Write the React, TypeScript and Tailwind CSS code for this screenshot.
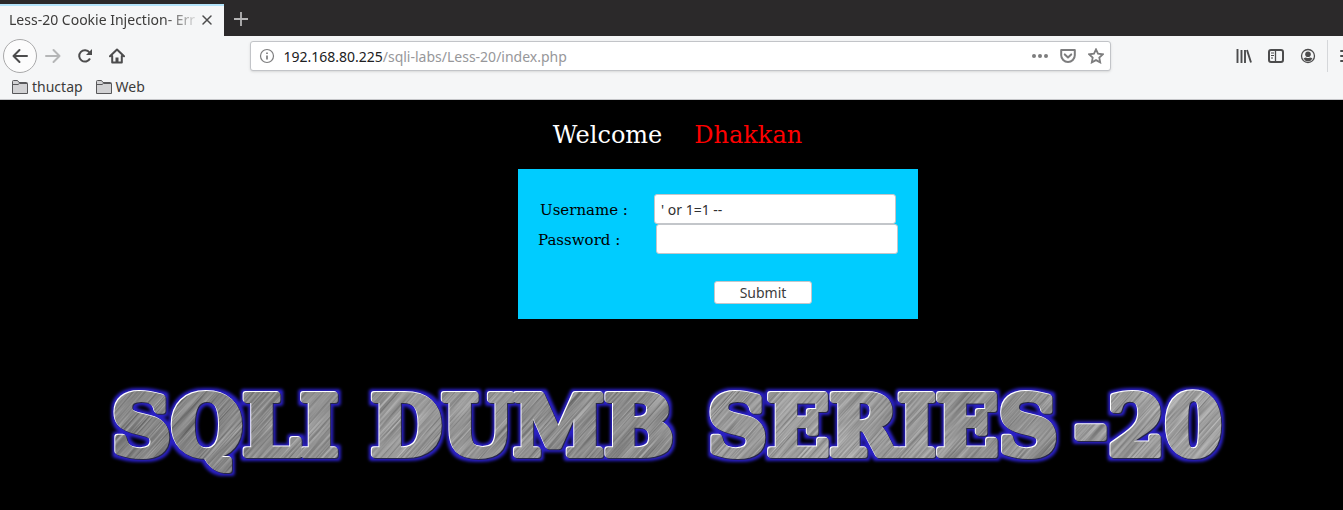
import type { ReactNode } from "react";

const ui = "font-['Noto_Sans',sans-serif]";

function Icon({ children, className = "" }: { children: ReactNode; className?: string }) {
  return (
    <svg viewBox="0 0 16 16" className={`h-4 w-4 shrink-0 ${className}`} fill="none" stroke="currentColor" strokeWidth="2" strokeLinecap="round" strokeLinejoin="round" aria-hidden="true">
      {children}
    </svg>
  );
}

function ToolButton({ label, children, className = "w-8 h-8" }: { label: string; children: ReactNode; className?: string }) {
  return (
    <button type="button" aria-label={label} className={`flex shrink-0 items-center justify-center ${className}`}>
      {children}
    </button>
  );
}

function Bookmark({ name }: { name: string }) {
  return (
    <a href="#" className="flex items-center gap-1">
      <svg viewBox="0 0 16 16" className="h-4 w-4" aria-hidden="true">
        <path d="M.5 14.500V2.500Q.5 1.500 1.500 1.500H5.500L7 3.500H14.500Q15.500 3.500 15.500 4.500V14.500Z" fill="#d2d2d4" stroke="#58585a" />
        <path d="M1 5.500H6L7.500 4.500H15" fill="none" stroke="#58585a" />
      </svg>
      {name}
    </a>
  );
}

function Browser() {
  return (
    <header className={`${ui} bg-[#f5f6f7] text-sm text-[#3c3b3a]`}>
      <div className="flex h-9 bg-[#2b292a] pt-1">
        <div className="flex w-56 items-center border-t-2 border-[#b3e3fa] bg-[#f5f6f7] pr-[7px] pb-0.5 pl-[9px]">
          <span className="flex-1 whitespace-nowrap [mask-image:linear-gradient(to_right,black_155px,transparent_192px)]">
            Less-20 Cookie Injection- Err
          </span>
          <button type="button" aria-label="Close tab" className="flex h-5 w-5 items-center justify-center text-[#4c4c4c]">
            <Icon><path d="M4 4l8 8M12 4l-8 8" strokeWidth="1.500" /></Icon>
          </button>
        </div>
        <button type="button" aria-label="New tab" className="flex w-[34px] items-center justify-center pb-0.5 text-[#b5b4b5]">
          <Icon><path d="M8 1v14M1 8h14" strokeWidth="1.800" strokeLinecap="butt" /></Icon>
        </button>
      </div>

      <div className="flex h-10 items-center overflow-hidden pl-[3px] text-[#4c4c4d]">
        <ToolButton label="Back" className="h-[34px] w-[34px] rounded-full border border-[#a9a9aa] bg-[#fcfcfc]">
          <Icon><path d="M15 8H1.500M7.500 2L1.500 8l6 6" /></Icon>
        </ToolButton>
        <ToolButton label="Forward" className="h-8 w-8 text-[#b5b6b7]">
          <Icon><path d="M1 8h13.500M8.500 2l6 6-6 6" /></Icon>
        </ToolButton>
        <ToolButton label="Reload">
          <Icon>
            <path d="M13 10.500A5.700 5.700 0 1 1 12.500 4.500" strokeLinecap="butt" />
            <path d="M15 1v6H9z" fill="currentColor" stroke="none" />
          </Icon>
        </ToolButton>
        <ToolButton label="Home">
          <Icon>
            <path d="M1 8.300L8 1.500l7 6.800M3.200 8v6.500h9.600V8" />
            <path d="M6.500 14V9.500h3V14z" fill="currentColor" stroke="none" />
          </Icon>
        </ToolButton>
        <div className="flex-1" />
        <div className="flex h-[30px] w-[64.2%] items-center gap-3 rounded-[3px] border border-[#c2c4c8] bg-white pr-1.5 pl-2 text-[#7d7d7e] shadow-sm">
          <Icon>
            <circle cx="8" cy="8" r="6.500" strokeWidth="1.200" />
            <path d="M8 7.500v4M8 4.500v1.500" strokeWidth="1.700" strokeLinecap="butt" />
          </Icon>
          <a href="#" className="-ml-1 flex-1 pt-0.5 whitespace-nowrap text-[#97979a]">
            <span className="text-[#202022]">192.168.80.225</span>/sqli-labs/Less-20/index.php
          </a>
          <button type="button" aria-label="Page actions">
            <Icon>
              <g fill="currentColor" stroke="none"><circle cx="2" cy="8" r="2" /><circle cx="8" cy="8" r="2" /><circle cx="14" cy="8" r="2" /></g>
            </Icon>
          </button>
          <button type="button" aria-label="Save to Pocket">
            <Icon>
              <path d="M1.200 2h13.600v5.200a6.800 6.800 0 0 1-13.600 0z" />
              <path d="M4.800 6.400L8 9.400l3.200-3" />
            </Icon>
          </button>
          <button type="button" aria-label="Bookmark this page">
            <Icon><path d="M8 1.400l2 4.300 4.800.6-3.500 3.300.9 4.800L8 12.100l-4.200 2.300.9-4.800L1.200 6.300 6 5.700z" strokeWidth="1.800" strokeLinejoin="miter" /></Icon>
          </button>
        </div>
        <div className="flex-1" />
        <ToolButton label="Library">
          <Icon><path d="M1.500 1v14M5.500 2v13M9 2V15M11 2l4 12.500" strokeWidth="1.900" strokeLinecap="butt" /></Icon>
        </ToolButton>
        <ToolButton label="Sidebars">
          <Icon>
            <rect x="1" y="2" width="14" height="12" rx="2" />
            <path d="M7.500 2v12" strokeWidth="1.300" />
            <path d="M3 5h3M3 7.500h3M3 10h2" strokeWidth="1" strokeLinecap="butt" />
          </Icon>
        </ToolButton>
        <ToolButton label="Account">
          <Icon>
            <circle cx="8" cy="8" r="6.500" strokeWidth="1.300" />
            <circle cx="8" cy="6.300" r="2.800" fill="currentColor" stroke="none" />
            <path d="M3.500 10.500Q5 9.500 6 9.500q2 1 4 0 1 0 2.500 1Q11 13.300 8 13.300T3.500 10.500z" fill="currentColor" stroke="none" />
          </Icon>
        </ToolButton>
        <div className="ml-[3px] h-8 w-px shrink-0 bg-[#d5d7da]" />
        <div className="w-[15px] shrink-0 overflow-hidden pl-3">
          <button type="button" aria-label="Open menu" className="block">
            <Icon><path d="M1 3h14M1 8h14M1 13h14" /></Icon>
          </button>
        </div>
      </div>

      <nav aria-label="Bookmarks" className="flex h-6 items-center gap-[13px] border-b border-[#c5c6c9] pb-0.5 pl-3">
        <Bookmark name="thuctap" />
        <Bookmark name="Web" />
      </nav>
    </header>
  );
}

function Banner() {
  return (
    <svg viewBox="0 0 1343 110" className="mt-14 w-full" role="img" aria-label="SQLI DUMB SERIES-20">
      <defs>
        <linearGradient id="steel" x1="0" y1="0" x2="180" y2="70" gradientUnits="userSpaceOnUse" spreadMethod="reflect">
          <stop offset="0" stopColor="#9c9c9c" />
          <stop offset="1" stopColor="#808080" />
        </linearGradient>
        <linearGradient id="sheen" x1="0" x2="1">
          <stop offset="0" stopColor="#fff" stopOpacity="0" />
          <stop offset=".5" stopColor="#fff" stopOpacity=".12" />
          <stop offset="1" stopColor="#fff" stopOpacity=".22" />
        </linearGradient>
        <filter id="grain" x="0" y="0" width="100%" height="100%" colorInterpolationFilters="sRGB">
          <feTurbulence type="fractalNoise" baseFrequency="0.015 0.6" numOctaves="2" seed="4" />
          <feColorMatrix values="1.600 0 0 0 -.3  1.600 0 0 0 -.3  1.600 0 0 0 -.3  0 0 0 0 .28" />
        </filter>
        <filter id="bevel" x="-5%" y="-20%" width="110%" height="140%" colorInterpolationFilters="sRGB">
          <feOffset in="SourceAlpha" dx="-1" dy="-1" result="up" />
          <feFlood floodColor="#fff" />
          <feComposite in2="up" operator="in" result="light" />
          <feOffset in="SourceAlpha" dx="1" dy="1" result="down" />
          <feFlood floodColor="#26264a" />
          <feComposite in2="down" operator="in" result="shade" />
          <feMorphology in="SourceAlpha" operator="dilate" radius="3" result="wide" />
          <feGaussianBlur in="wide" stdDeviation="1.500" result="soft" />
          <feFlood floodColor="#2a20c4" />
          <feComposite in2="soft" operator="in" result="glow" />
          <feMerge>
            <feMergeNode in="glow" />
            <feMergeNode in="shade" />
            <feMergeNode in="light" />
            <feMergeNode in="SourceGraphic" />
          </feMerge>
        </filter>
        <pattern id="metal" width="1343" height="110" patternUnits="userSpaceOnUse">
          <rect width="1343" height="110" fill="url(#steel)" />
          <rect width="1343" height="110" fill="url(#sheen)" />
          <g transform="rotate(-48)">
            <rect x="-120" y="-20" width="1100" height="1120" filter="url(#grain)" />
          </g>
        </pattern>
      </defs>
      <g filter="url(#bevel)" className="font-['DejaVu_Serif',serif] text-[82px] font-bold" fill="url(#metal)" stroke="url(#metal)" strokeWidth="6" strokeLinejoin="round">
        <text x="112" y="80">SQLI</text>
        <text x="371" y="80">DUMB</text>
        <text x="708" y="80">SERIES<tspan x="1074">-20</tspan></text>
      </g>
    </svg>
  );
}

const field = `${ui} h-[30px] w-[242px] rounded-[3px] border border-[#c3c6ca] bg-white px-1.5 text-sm text-[#303030] outline-none`;

export default function App() {
  return (
    <div className="min-h-screen overflow-hidden bg-black">
      <Browser />
      <main className="font-['DejaVu_Serif',serif]">
        <h1 className="flex justify-center gap-8 pt-[17px] pl-3 text-2xl leading-9 text-white">
          Welcome <span className="text-[#f00]">Dhakkan</span>
        </h1>
        <div className="mt-4 flex justify-center pl-[93px]">
          <form className="h-[150px] w-[400px] bg-[#00ccff] px-5 pt-[25px] text-[15px] text-black" onSubmit={(e) => e.preventDefault()}>
            <div className="flex items-center justify-between pr-0.5 pl-0.5">
              <label htmlFor="uname" className="pt-0.5">Username :</label>
              <input id="uname" name="uname" type="text" defaultValue="' or 1=1 --" className={field} />
            </div>
            <div className="flex items-center justify-between">
              <label htmlFor="passwd" className="pt-0.5">Password :</label>
              <input id="passwd" name="passwd" type="password" className={field} />
            </div>
            <div className="flex justify-center pt-[27px] pl-[90px]">
              <button type="submit" className={`${ui} h-[23px] w-[98px] rounded-[3px] border border-[#c3c6ca] bg-white text-sm leading-5 text-[#3c3c3c]`}>
                Submit
              </button>
            </div>
          </form>
        </div>
        <Banner />
      </main>
    </div>
  );
}
